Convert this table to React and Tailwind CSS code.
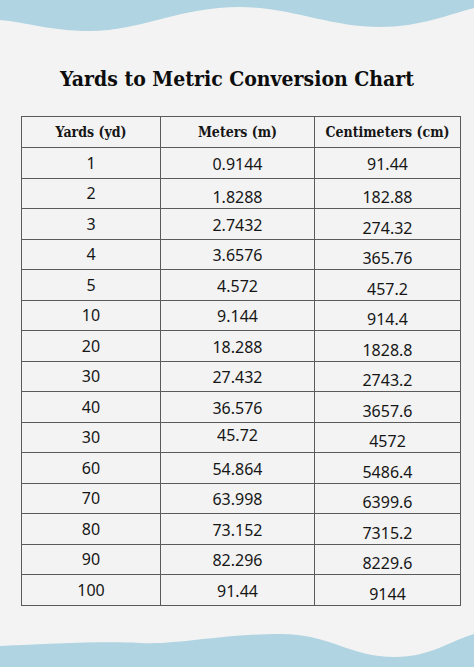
import React from 'react'

const rows = [
  ['1', '0.9144', '91.44'],
  ['2', '1.8288', '182.88'],
  ['3', '2.7432', '274.32'],
  ['4', '3.6576', '365.76'],
  ['5', '4.572', '457.2'],
  ['10', '9.144', '914.4'],
  ['20', '18.288', '1828.8'],
  ['30', '27.432', '2743.2'],
  ['40', '36.576', '3657.6'],
  ['30', '45.72', '4572'],
  ['60', '54.864', '5486.4'],
  ['70', '63.998', '6399.6'],
  ['80', '73.152', '7315.2'],
  ['90', '82.296', '8229.6'],
  ['100', '91.44', '9144'],
]

const slab = "font-['DejaVu_Serif_Condensed','DejaVu_Serif',serif] font-bold"

export default function App() {
  return (
    <div className="w-[474px] h-[667px] bg-[#f3f3f3] flex flex-col overflow-hidden text-[#161616]">
      {/* top wave */}
      <svg className="block w-[474px] h-[32px]" viewBox="0 0 474 32">
        <path d="M0 0 H474 V8 C450 14 420 27 380 27 C330 27 290 7 240 7 C180 7 140 31 90 31 C50 31 25 22 0 20 Z" fill="#b0d4e1" />
      </svg>

      <h1 className={`${slab} mt-[33px] text-center text-[21px] leading-[28px] text-[#0d0d0d]`}>
        Yards to Metric Conversion Chart
      </h1>

      {/* table */}
      <div className="mt-[23px] px-[21px]">
        <table className="w-[439px] table-fixed border-collapse font-['Noto_Sans',sans-serif] text-[16px]">
          <colgroup>
            <col className="w-[139px]" />
            <col className="w-[154px]" />
            <col className="w-[146px]" />
          </colgroup>
          <thead>
            <tr>
              <th className={`${slab} h-[31px] border border-[#5a5a5a] text-[14px]`}>Yards (yd)</th>
              <th className={`${slab} h-[31px] border border-[#5a5a5a] text-[14px]`}>Meters (m)</th>
              <th className={`${slab} h-[31px] border border-[#5a5a5a] text-[14px]`}>Centimeters (cm)</th>
            </tr>
          </thead>
          <tbody>
            {rows.map((r, i) => (
              <tr key={i}>
                <td className="h-[30.5px] border border-[#5a5a5a] text-center leading-none">{r[0]}</td>
                <td className="h-[30.5px] border border-[#5a5a5a] text-center leading-none">
                  <span className={i === 1 ? 'relative top-[4px]' : i === 9 ? 'relative top-[-2px]' : 'relative top-[1px]'}>{r[1]}</span>
                </td>
                <td className="h-[30.5px] border border-[#5a5a5a] text-center leading-none">
                  <span className={i === 0 ? 'relative top-[1px]' : 'relative top-[4px]'}>{r[2]}</span>
                </td>
              </tr>
            ))}
          </tbody>
        </table>
      </div>

      {/* bottom wave */}
      <svg className="block mt-auto w-[474px] h-[34px]" viewBox="0 0 474 34">
        <path d="M0 13 C50 11 100 8 140 10 C180 12 220 1 280 1 C330 1 350 24 395 24 C430 24 450 8 474 1 V34 H0 Z" fill="#b0d4e1" />
      </svg>
    </div>
  )
}
